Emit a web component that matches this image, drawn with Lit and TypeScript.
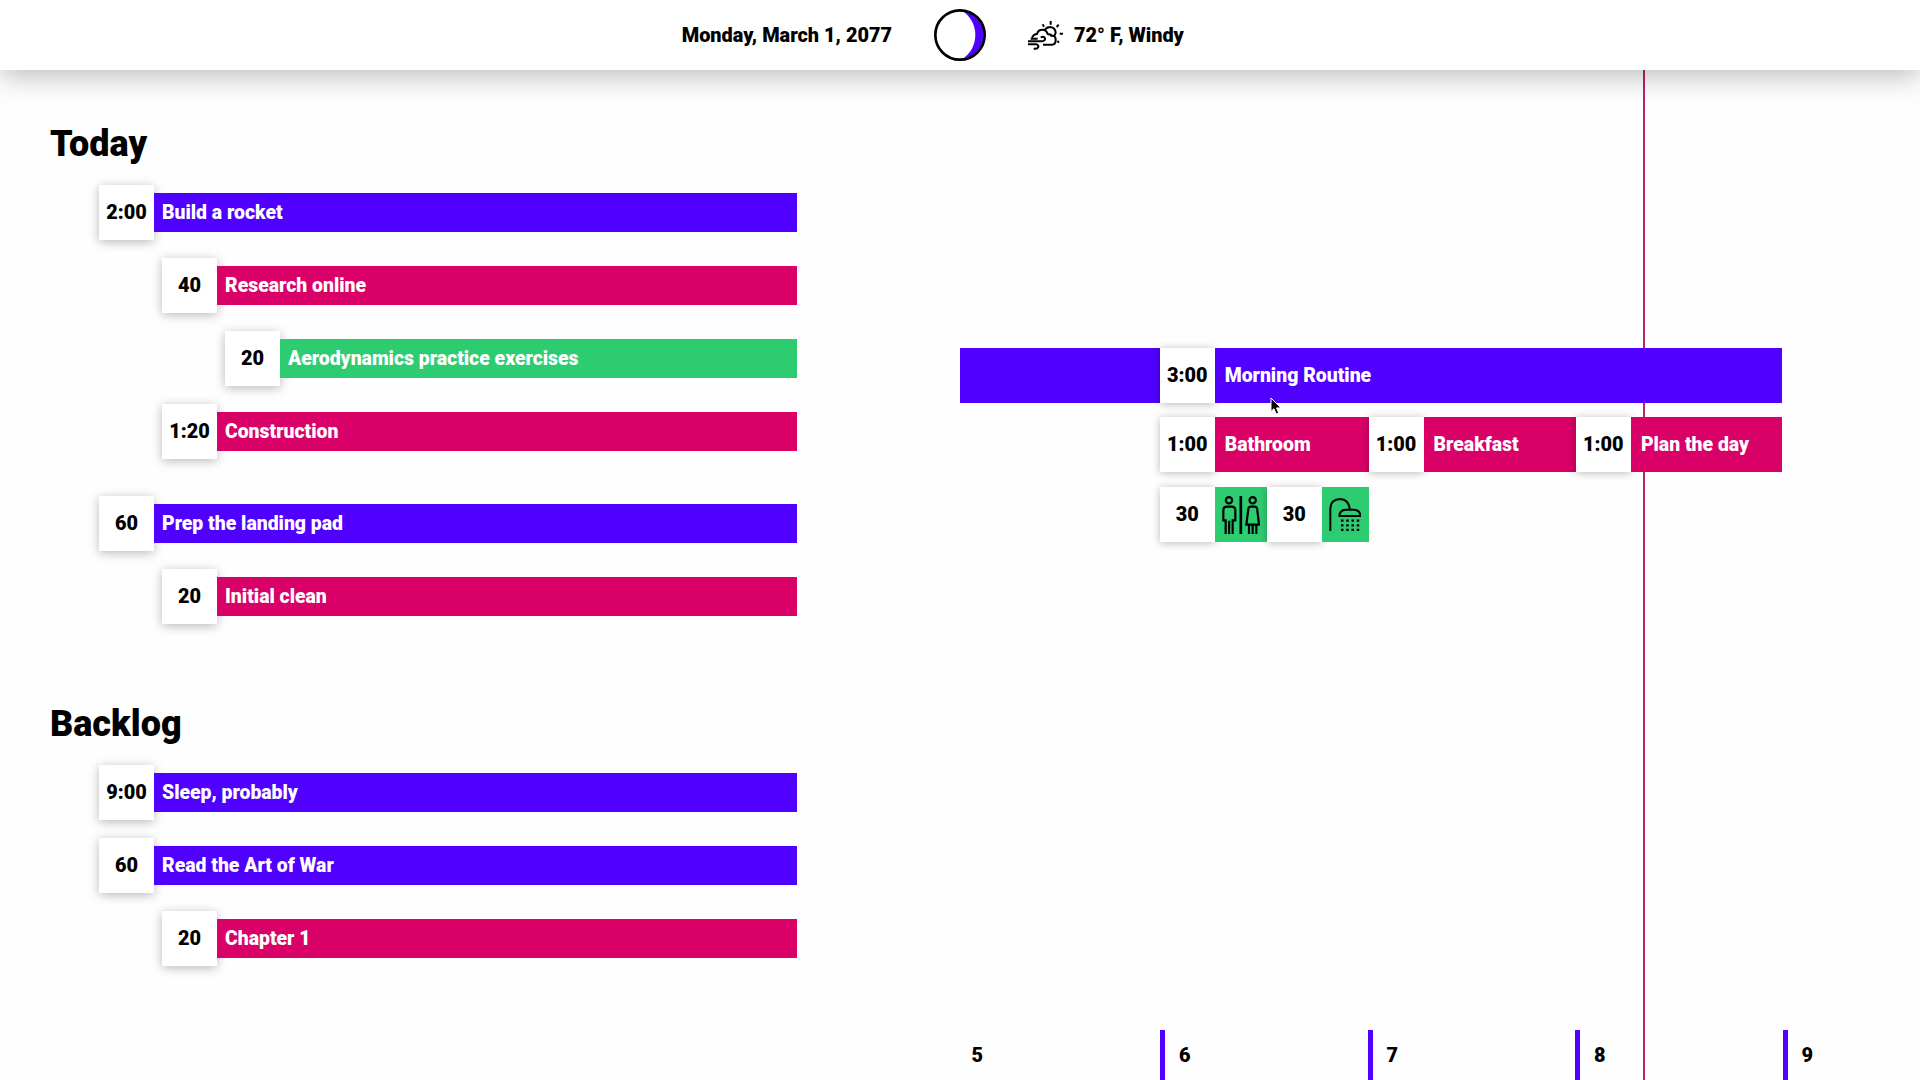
import { LitElement, html, css, svg, nothing } from "lit";
import { customElement, property } from "lit/decorators.js";
import { classMap } from "lit/directives/class-map.js";
import { styleMap } from "lit/directives/style-map.js";

type Task = { time: string; name: string; level: number; gap?: boolean };
type Block = { time: string; label?: string; icon?: "restroom" | "shower"; width: number };

const TODAY: Task[] = [
  { time: "2:00", name: "Build a rocket", level: 0 },
  { time: "40", name: "Research online", level: 1 },
  { time: "20", name: "Aerodynamics practice exercises", level: 2 },
  { time: "1:20", name: "Construction", level: 1 },
  { time: "60", name: "Prep the landing pad", level: 0, gap: true },
  { time: "20", name: "Initial clean", level: 1 },
];

const BACKLOG: Task[] = [
  { time: "9:00", name: "Sleep, probably", level: 0 },
  { time: "60", name: "Read the Art of War", level: 0 },
  { time: "20", name: "Chapter 1", level: 1 },
];

const ROWS: Block[][] = [
  [{ time: "3:00", label: "Morning Routine", width: 622.7 }],
  [
    { time: "1:00", label: "Bathroom", width: 208.9 },
    { time: "1:00", label: "Breakfast", width: 207.3 },
    { time: "1:00", label: "Plan the day", width: 206.5 },
  ],
  [
    { time: "30", icon: "restroom", width: 107 },
    { time: "30", icon: "shower", width: 102 },
  ],
];

const restroom = svg`
  <svg viewBox="0 0 114 114" width="38" height="38" fill="none" stroke="#000" stroke-width="6.500">
    <circle cx="21" cy="13" r="9.500" />
    <circle cx="92" cy="13" r="9.500" />
    <path d="M56.500 0V114" stroke-width="8" />
    <path d="M11 114V73H4V43Q4 32 15 32H28Q40 32 40 43V73H32V114M21.500 74V114" />
    <path d="M86 32H98Q104 32 105.500 39L111 86H73L79 39Q80 32 86 32ZM81 88V114M92 88V114M103 88V114" />
  </svg>`;

const shower = svg`
  <svg viewBox="0 0 98 100" width="32.600" height="33.300" fill="none" stroke="#000" stroke-width="6">
    <path d="M4 100V32Q5 4 34 3Q58 4 63 33" />
    <path d="M31 54Q32 36 50 35H76Q93 36 95 54Z" stroke-linejoin="round" />
    <path d="M36 68H96M36 82H96M36 96H96" stroke-width="7" stroke-dasharray="7.500 8.300" />
  </svg>`;

@customElement("app-root")
export class AppRoot extends LitElement {
  static styles = css`
    :host {
      display: block;
      font-family: Roboto, "Liberation Sans", sans-serif;
      font-weight: 900;
      font-size: 19.900px;
      color: #000;
    }
    .page {
      width: 1920px;
      height: 1080px;
      overflow: hidden;
      background: #fefefe;
      display: flex;
      flex-direction: column;
      position: relative;
    }
    .top {
      height: 70px;
      flex: none;
      background: #fff;
      box-shadow: 0 4px 30px rgba(0, 0, 0, 0.3);
      display: grid;
      grid-template-columns: 1fr 52px 1fr;
      column-gap: 42px;
      align-items: center;
      position: relative;
      z-index: 2;
    }
    .date {
      text-align: right;
    }
    .weather {
      display: flex;
      align-items: center;
      gap: 11px;
    }
    svg {
      display: block;
      flex: none;
    }
    .body {
      flex: 1;
      display: grid;
      grid-template-columns: 960px 960px;
      min-height: 0;
    }
    .lists {
      padding: 50px 163px 0 50px;
    }
    .timeline {
      display: flex;
      flex-direction: column;
      justify-content: space-between;
      padding-top: 278px;
      position: relative;
      overflow: hidden;
    }
    .now {
      position: absolute;
      left: 683px;
      top: 0;
      bottom: 0;
      width: 2px;
      background: #b92568;
    }
    .rows {
      display: flex;
      flex-direction: column;
      position: relative;
    }
    .row {
      display: flex;
      height: 55px;
      margin-bottom: 15px;
    }
    .first {
      margin-bottom: 14px;
    }
    .lead {
      width: 199.700px;
      flex: none;
    }
    .lead.filled,
    .first .fill {
      background: #5000ff;
    }
    .block {
      display: flex;
      flex: none;
    }
    .slot {
      box-sizing: border-box;
      width: 55px;
      height: 55px;
      padding-bottom: 1px;
      flex: none;
      background: #fff;
      display: flex;
      align-items: center;
      justify-content: center;
      box-shadow: 0 1px 8px rgba(0, 0, 0, 0.28);
    }
    .fill {
      flex: 1;
      display: flex;
      align-items: center;
      padding: 0 0 1px 10px;
      font-size: 19.400px;
      color: #fff;
      background: #d90068;
    }
    .fill.icon {
      background: #2ecc71;
      padding: 0;
      justify-content: center;
    }
    .hours {
      display: flex;
      height: 50px;
      padding-left: 11.500px;
    }
    .hour {
      width: 207.500px;
      flex: none;
      display: flex;
      align-items: center;
    }
    .tick {
      width: 5px;
      height: 50px;
      margin-right: 14px;
      margin-left: -19px;
      background: #5000ff;
    }
    .cursor {
      position: absolute;
      left: 1270px;
      top: 397px;
      z-index: 3;
    }
  `;

  private block(b: Block) {
    return html`<div class="block" style=${styleMap({ width: `${b.width}px` })}>
      <div class="slot">${b.time}</div>
      <div class=${classMap({ fill: true, icon: !!b.icon })}>
        ${b.icon === "restroom" ? restroom : b.icon === "shower" ? shower : b.label}
      </div>
    </div>`;
  }

  render() {
    return html`<div class="page">
      <header class="top">
        <div class="date">Monday, March 1, 2077</div>
        <svg viewBox="0 0 156 156" width="52" height="52">
          <path d="M88 7.700A86.600 86.600 0 0 1 88 148.300A71 71 0 0 0 88 7.700Z" fill="#5000ff" />
          <circle cx="78" cy="78" r="74" fill="none" stroke="#000" stroke-width="8" />
        </svg>
        <div class="weather">
          <svg viewBox="0 0 105 87" width="35" height="29" fill="none" stroke="#000" stroke-width="6">
            <path d="M68 0V11M44 10L48 17M92 11L86 18M95 38H105M88 60L93 65" />
            <path d="M12 50Q17 39 27 39Q30 26 43 26Q56 26 60 41" />
            <path d="M50 27Q56 18 67 18Q82 20 83 35Q82 41 78 45Q71 46 66 42M60 41Q67 38 72 44M78 45Q84 49 83 59Q82 71 72 71H45" />
            <path d="M0 61H42Q52 60 51 52Q48 45 38 49M0 70H24Q32 71 31 78Q27 86 17 82M8 53H29" />
          </svg>
          <span>72° F, Windy</span>
        </div>
      </header>
      <div class="body">
        <section class="lists">
          <task-list heading="Today" .tasks=${TODAY}></task-list>
          <task-list heading="Backlog" .tasks=${BACKLOG}></task-list>
        </section>
        <section class="timeline">
          <div class="now"></div>
          <div class="rows">
            ${ROWS.map(
              (row, i) => html`<div class=${classMap({ row: true, first: i === 0 })}>
                <div class=${classMap({ lead: true, filled: i === 0 })}></div>
                ${row.map((b) => this.block(b))}
              </div>`
            )}
          </div>
          <div class="hours">
            ${[5, 6, 7, 8, 9].map(
              (h) => html`<div class="hour">${h > 5 ? html`<i class="tick"></i>` : nothing}${h}</div>`
            )}
          </div>
        </section>
      </div>
      <svg class="cursor" viewBox="0 0 12 18" width="12" height="18">
        <path d="M1 1V14.500L4 11.700L6.200 17L8.700 16L6.500 10.900H10.800Z" fill="#000" stroke="#fff" stroke-width="1" />
      </svg>
    </div>`;
  }
}

@customElement("task-list")
export class TaskList extends LitElement {
  @property() heading = "";
  @property({ attribute: false }) tasks: Task[] = [];

  static styles = css`
    :host {
      display: block;
      margin-bottom: 76px;
    }
    h1 {
      margin: 0;
      height: 47px;
      line-height: 49px;
      font-size: 36px;
      font-weight: 900;
    }
    .items {
      display: flex;
      flex-direction: column;
      gap: 18px;
      padding: 18px 0 0 49px;
    }
    .task {
      display: flex;
      align-items: center;
      height: 55px;
    }
    .level1 {
      margin-left: 63px;
    }
    .level2 {
      margin-left: 126px;
    }
    .spaced {
      margin-top: 19px;
    }
    .time {
      box-sizing: border-box;
      width: 55px;
      height: 55px;
      padding-bottom: 1px;
      flex: none;
      background: #fff;
      box-shadow: 0 2px 10px rgba(0, 0, 0, 0.28);
      display: flex;
      align-items: center;
      justify-content: center;
    }
    .bar {
      box-sizing: border-box;
      flex: 1;
      height: 39px;
      display: flex;
      align-items: center;
      padding: 0 0 1px 8px;
      font-size: 19.400px;
      color: #fff;
      background: #5000ff;
    }
    .level1 .bar {
      background: #d90068;
    }
    .level2 .bar {
      background: #2ecc71;
    }
  `;

  render() {
    return html`<h1>${this.heading}</h1>
      <div class="items">
        ${this.tasks.map(
          (t) => html`<div class=${classMap({ task: true, [`level${t.level}`]: true, spaced: !!t.gap })}>
            <div class="time">${t.time}</div>
            <div class="bar">${t.name}</div>
          </div>`
        )}
      </div>`;
  }
}
